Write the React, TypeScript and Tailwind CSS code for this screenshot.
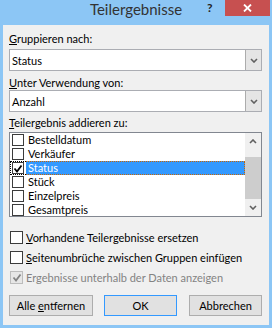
import React from 'react';

const Chevron = ({ dir = 'down' }: { dir?: 'up' | 'down' }) => (
  <svg width="8" height="5" viewBox="0 0 8 5">
    <path
      d={dir === 'down' ? 'M1 1 L4 4 L7 1' : 'M1 4 L4 1 L7 4'}
      stroke="#606060"
      strokeWidth="1.6"
      fill="none"
    />
  </svg>
);

const Check = ({ color = '#000' }: { color?: string }) => (
  <svg width="10" height="9" viewBox="0 0 10 9">
    <path d="M1.5 4.5 L4 7.5 L8.5 1.5" stroke={color} strokeWidth="1.8" fill="none" />
  </svg>
);

const Select = ({ value, className = '' }: { value: string; className?: string }) => (
  <div className={`h-[22px] flex border border-[#abadb3] bg-white ${className}`}>
    <div className="flex-1 flex items-center pl-[2px] leading-[15px]">{value}</div>
    <div className="w-[16px] flex items-center justify-center bg-[#e5e5e5] border-l border-[#acacac]">
      <Chevron />
    </div>
  </div>
);

const fields = ['Bestelldatum', 'Verkäufer', 'Status', 'Stück', 'Einzelpreis', 'Gesamtpreis'];

const ListRow = ({ label, checked, focused }: { label: string; checked?: boolean; focused?: boolean }) => (
  <div className="h-[14px] flex shrink-0">
    <div
      className={`w-[16px] flex items-center ${
        focused ? 'pl-[1px] border-y border-l border-dotted border-black' : 'pl-[2px]'
      }`}
    >
      <div className="w-[12px] h-[12px] border border-[#3c3c3c] bg-white flex items-center justify-center">
        {checked && <Check />}
      </div>
    </div>
    <div
      className={`flex-1 flex items-center pl-[2px] leading-[14px] ${
        focused ? 'bg-[#3399ff] text-white border-y border-r border-dotted border-[#cc6600]' : ''
      }`}
    >
      {label}
    </div>
  </div>
);

const CheckRow = ({ children, checked, disabled }: { children: React.ReactNode; checked?: boolean; disabled?: boolean }) => (
  <div className={`h-[19px] flex items-center ${disabled ? 'text-[#838383]' : ''}`}>
    <div
      className={`ml-[1px] w-[13px] h-[13px] border flex items-center justify-center ${
        disabled ? 'border-[#bcbcbc] bg-[#e6e6e6]' : 'border-[#3c3c3c] bg-white'
      }`}
    >
      {checked && <Check color={disabled ? '#838383' : '#000'} />}
    </div>
    <span className="ml-[3px] leading-[15px]">{children}</span>
  </div>
);

export default function App() {
  return (
    <div className="w-[272px] h-[328px] bg-[#8cc6f5] flex flex-col font-['Lato',sans-serif] text-[11px] text-black select-none">
      <div className="h-[25px] flex items-start shrink-0">
        <div className="w-[65px]" />
        <div className="flex-1 text-center text-[15px] leading-[19px] text-[#333]">Teilergebnisse</div>
        <div className="w-[65px] flex items-start">
          <span className="text-[12px] leading-[15px] font-bold text-[#222]">?</span>
          <div className="ml-auto mr-[2px] w-[45px] h-[16px] bg-[#c75050] flex items-center justify-center">
            <svg width="9" height="8" viewBox="0 0 9 8">
              <path d="M1 0.5 L8 7.5 M8 0.5 L1 7.5" stroke="#fff" strokeWidth="1.8" />
            </svg>
          </div>
        </div>
      </div>

      <div className="flex-1 mx-[3px] mb-[3px] bg-[#f0f0f0] pl-[6px] pr-[7px] pt-[6px] flex flex-col">
        <div className="leading-[15px]">
          <u>G</u>ruppieren nach:
        </div>
        <Select value="Status" className="mt-[3px]" />

        <div className="leading-[15px] mt-[4px]">
          <u>U</u>nter Verwendung von:
        </div>
        <Select value="Anzahl" />

        <div className="leading-[15px] mt-[3px]">
          <u>T</u>eilergebnis addieren zu:
        </div>
        <div className="mt-[2px] h-[85px] flex border border-[#828790] bg-white overflow-hidden">
          <div className="flex-1 flex flex-col">
            {fields.map((f) => (
              <ListRow key={f} label={f} checked={f === 'Status'} focused={f === 'Status'} />
            ))}
          </div>
          <div className="w-[16px] flex flex-col bg-[#f0f0f0]">
            <div className="h-[17px] flex items-center justify-center">
              <Chevron dir="up" />
            </div>
            <div className="h-[7px]" />
            <div className="h-[42px] bg-[#cdcdcd]" />
            <div className="h-[17px] flex items-center justify-center">
              <Chevron />
            </div>
          </div>
        </div>

        <div className="mt-[11px] flex flex-col gap-[1px]">
          <CheckRow>
            <u>V</u>orhandene Teilergebnisse ersetzen
          </CheckRow>
          <CheckRow>
            <u>S</u>eitenumbrüche zwischen Gruppen einfügen
          </CheckRow>
          <CheckRow checked disabled>
            Ergebnisse unterhalb der Daten anzeigen
          </CheckRow>
        </div>

        <div className="mt-[8px] flex">
          <button className="w-[84px] h-[21px] bg-[#e1e1e1] border border-[#adadad] leading-[15px]">
            Alle <u>e</u>ntfernen
          </button>
          <button className="ml-[11px] w-[73px] h-[21px] bg-[#e1e1e1] border border-[#3399ff] leading-[15px]">
            OK
          </button>
          <button className="ml-[12px] w-[73px] h-[21px] bg-[#e1e1e1] border border-[#adadad] leading-[15px]">
            Abbrechen
          </button>
        </div>
      </div>
    </div>
  );
}
